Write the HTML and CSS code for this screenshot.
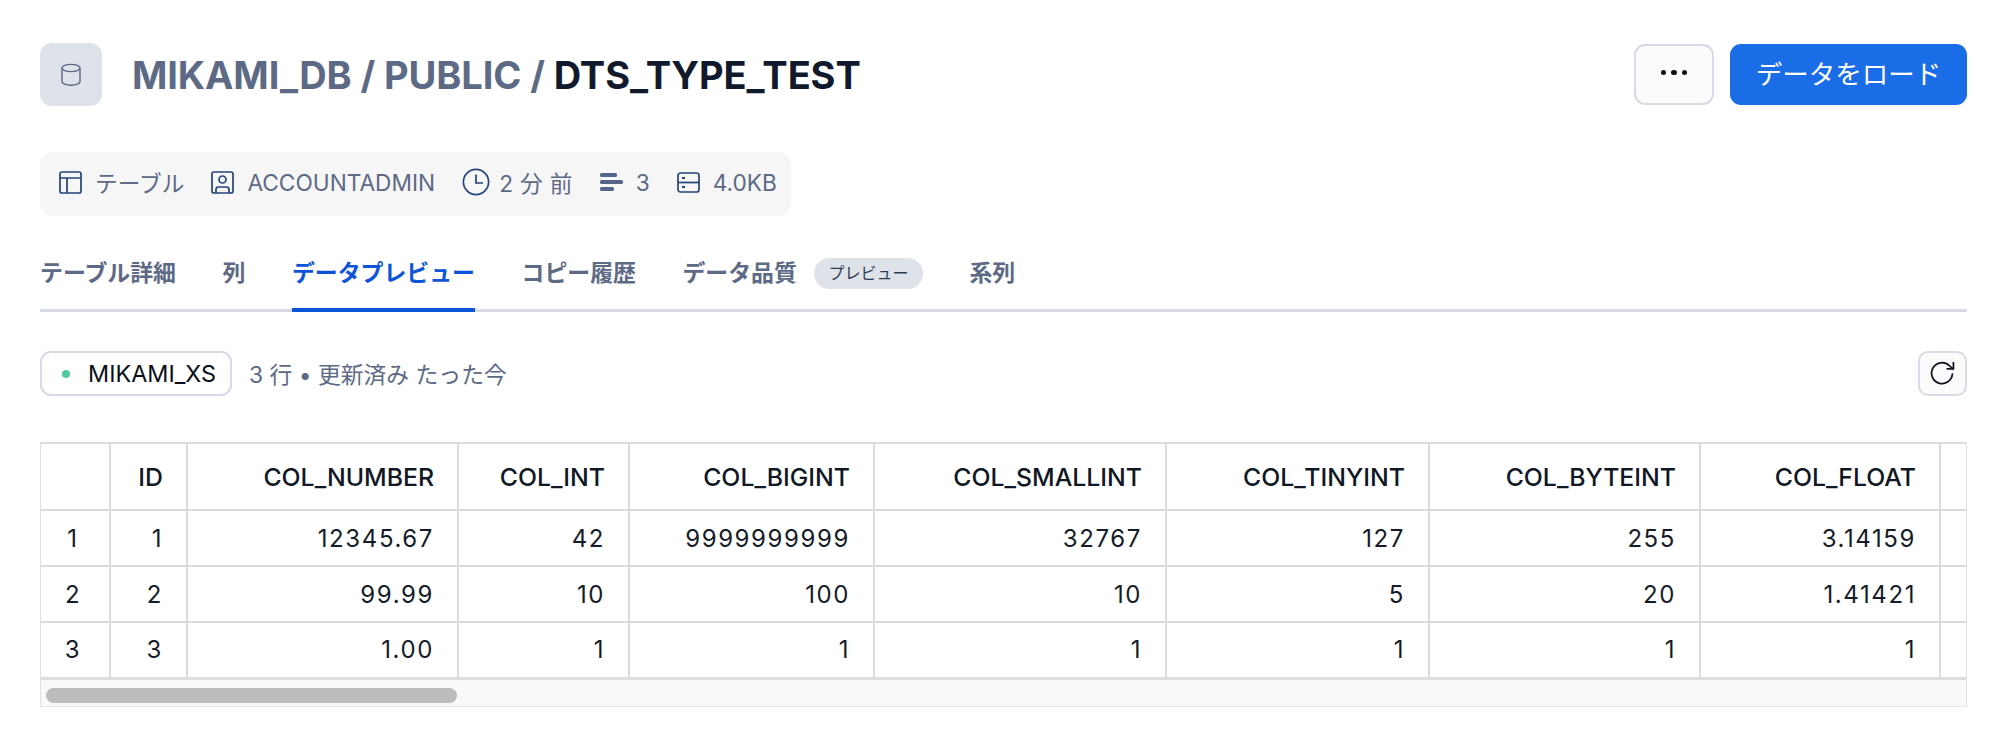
FILE: index.html
```html
<!DOCTYPE html>
<html lang="ja">
<head>
<meta charset="utf-8">
<title>DTS_TYPE_TEST</title>
<link rel="stylesheet" href="styles.css">
</head>
<body>
<main class="page">
  <header class="head">
    <div class="head-left">
      <div class="db-tile">
        <svg class="db-icon" viewBox="0 0 20 24" fill="none" stroke="currentColor" stroke-width="1.4"><ellipse cx="10" cy="5" rx="9" ry="3.6"/><path d="M1 5v13.5c0 2.2 4 3.8 9 3.8s9-1.600 9-3.800V5"/></svg>
      </div>
      <h1 class="title"><span class="crumb">MIKAMI_DB / PUBLIC / </span>DTS_TYPE_TEST</h1>
    </div>
    <div class="head-actions">
      <button class="more-btn" aria-label="more"><i></i><i></i><i></i></button>
      <button class="load-btn">データをロード</button>
    </div>
  </header>

  <div class="meta">
    <span class="meta-item">
      <svg class="ico" viewBox="0 0 23 23" fill="none" stroke="currentColor" stroke-width="1.7"><rect x="1" y="1" width="21" height="21" rx="2"/><path d="M1 7h21M8 7v15"/></svg>
      テーブル
    </span>
    <span class="meta-item">
      <svg class="ico" viewBox="0 0 23 23" fill="none" stroke="currentColor" stroke-width="1.7"><rect x="1" y="1" width="21" height="21" rx="2"/><circle cx="11.500" cy="8.500" r="3.500"/><path d="M5 22v-3.500c0-1.500 1-2.500 2.500-2.500h8c1.500 0 2.500 1 2.500 2.500V22"/></svg>
      ACCOUNTADMIN
    </span>
    <span class="meta-item tight">
      <svg class="ico clock" viewBox="0 0 28 28" fill="none" stroke="currentColor" stroke-width="1.700"><circle cx="14" cy="14" r="12.600"/><path d="M14 6.500V15h7"/></svg>
      <span class="spaced">2 分 前</span>
    </span>
    <span class="meta-item">
      <svg class="ico bars" viewBox="0 0 23 18" fill="currentColor"><rect x="0" y="0" width="17" height="4" rx="1.500"/><rect x="0" y="7" width="23" height="4" rx="1.500"/><rect x="0" y="14" width="14" height="4" rx="1.500"/></svg>
      3
    </span>
    <span class="meta-item">
      <svg class="ico" viewBox="0 0 23 23" fill="none" stroke="currentColor" stroke-width="1.700"><rect x="1" y="2" width="21" height="19" rx="2.500"/><path d="M1 11.500h21"/><path d="M5 7h3M5 16h3" stroke-width="2.200"/></svg>
      4.0KB
    </span>
  </div>

  <nav class="tabs">
    <a class="tab">テーブル詳細</a>
    <a class="tab">列</a>
    <a class="tab active">データプレビュー</a>
    <a class="tab">コピー履歴</a>
    <a class="tab">データ品質<span class="badge">プレビュー</span></a>
    <a class="tab">系列</a>
  </nav>

  <div class="toolbar">
    <div class="toolbar-left">
      <span class="chip"><i class="dot"></i>MIKAMI_XS</span>
      <span class="status">3 行 • 更新済み たった今</span>
    </div>
    <button class="refresh" aria-label="refresh">
      <svg viewBox="0 0 24 24" fill="none" stroke="currentColor" stroke-width="1.700" stroke-linecap="round" stroke-linejoin="round"><path d="M21.500 12.500A10 10 0 1 1 18.500 4.500L22 7.500"/><path d="M22.500 1.500v6h-6"/></svg>
    </button>
  </div>

  <div class="grid-wrap">
    <table class="grid">
      <colgroup>
        <col class="c0"><col class="c1"><col class="c2"><col class="c3"><col class="c4"><col class="c5"><col class="c6"><col class="c7"><col class="c8"><col class="c9">
      </colgroup>
      <thead>
        <tr><th></th><th>ID</th><th>COL_NUMBER</th><th>COL_INT</th><th>COL_BIGINT</th><th>COL_SMALLINT</th><th>COL_TINYINT</th><th>COL_BYTEINT</th><th>COL_FLOAT</th><th></th></tr>
      </thead>
      <tbody>
        <tr><td class="idx">1</td><td>1</td><td>12345.67</td><td>42</td><td>9999999999</td><td>32767</td><td>127</td><td>255</td><td>3.14159</td><td></td></tr>
        <tr><td class="idx">2</td><td>2</td><td>99.99</td><td>10</td><td>100</td><td>10</td><td>5</td><td>20</td><td>1.41421</td><td></td></tr>
        <tr><td class="idx">3</td><td>3</td><td>1.00</td><td>1</td><td>1</td><td>1</td><td>1</td><td>1</td><td>1</td><td></td></tr>
      </tbody>
    </table>
    <div class="scroll"><div class="thumb"></div></div>
  </div>
</main>
</body>
</html>
```
FILE: styles.css
```css
* { box-sizing: border-box; }
html, body { margin: 0; padding: 0; background: #fff; }
body {
  font-family: Inter, "Noto Sans CJK JP", sans-serif;
  color: #5d6a85;
  height: 741px;
  overflow: hidden;
}
.page { padding: 43px 33px 0 40px; }

.head { display: flex; justify-content: space-between; align-items: flex-start; height: 63px; }
.head-left { display: flex; align-items: center; gap: 30px; height: 63px; }
.db-tile {
  width: 62px; height: 63px; border-radius: 12px; background: #dee3ea;
  display: flex; align-items: center; justify-content: center; color: #5d6a85;
}
.db-icon { width: 20px; height: 24px; }
.title { margin: 0; font-size: 38px; font-weight: 700; color: #111a2c; letter-spacing: -0.1px; line-height: 46px; }
.crumb { color: #5d6a85; }
.head-actions { display: flex; gap: 16px; margin-top: 1px; }
.more-btn {
  width: 80px; height: 61px; border: 2px solid #d6dbe6; border-radius: 11px; background: #fbfbfc;
  display: flex; align-items: center; justify-content: center; gap: 5px; padding: 0 0 4px;
}
.more-btn i { width: 5.500px; height: 5.500px; border-radius: 50%; background: #0b0f19; }
.load-btn {
  width: 237px; height: 61px; border: 0; border-radius: 11px; background: #1a6ce7; color: #fff;
  font: 400 26.500px Inter, "Noto Sans CJK JP", sans-serif; padding: 0 0 5px;
}

.meta {
  margin-top: 46px; height: 64px; width: 751px; background: #f6f6f7; border-radius: 13px;
  display: flex; align-items: center; padding: 0 19px 4px; gap: 27px; font-size: 22.700px; color: #5d6a85;
}
.meta-item { display: inline-flex; align-items: center; gap: 13px; white-space: nowrap; }
.meta-item.tight { gap: 9px; }
.spaced { letter-spacing: 0.300px; }
.ico { width: 23px; height: 23px; color: #25447a; flex: none; }
.clock { width: 28px; height: 28px; }
.bars { height: 18px; color: #55658a; }

.tabs {
  margin-top: 29px; height: 67px; display: flex; gap: 46.500px; align-items: flex-start;
  border-bottom: 3px solid #d6dbe6;
}
.tab {
  height: 67px; line-height: 56px; font-size: 22.900px; font-weight: 600; color: #5d6a85;
  display: inline-flex; align-items: flex-start; white-space: nowrap;
}
.tab.active { color: #0d55d8; border-bottom: 4px solid #0d55d8; }
.badge {
  margin: 13px 0 0 17px; width: 109px; height: 31px; border-radius: 16px; background: #dee3ea;
  color: #2f3a50; font-size: 16px; font-weight: 400; line-height: 31px; text-align: center;
}

.toolbar { margin-top: 39px; display: flex; justify-content: space-between; align-items: center; height: 45px; }
.toolbar-left { display: flex; align-items: center; gap: 17px; }
.chip {
  width: 192px; height: 45px; border: 2px solid #d6dbe6; border-radius: 11px; background: #fff;
  display: inline-flex; align-items: center; padding-left: 20px; color: #0b0f19; font-size: 23.400px;
}
.dot { width: 8px; height: 8px; border-radius: 50%; background: #4fc9a0; margin-right: 18px; }
.status { font-size: 22.800px; color: #5d6a85; }
.refresh {
  width: 49px; height: 45px; border: 2px solid #d6dbe6; border-radius: 10px; background: #fbfbfc;
  color: #11151f; padding: 0; display: flex; align-items: center; justify-content: center;
}
.refresh svg { width: 25px; height: 25px; }

.grid-wrap { margin-top: 46px; border: 1px solid #dcdfe6; border-bottom-color: #e6e7ea; border-top: 0; overflow: hidden; }
.grid { border-collapse: collapse; table-layout: fixed; width: 1926px; font-size: 24px; color: #151b28; }
.grid th, .grid td { border: 2px solid #dbdcdf; padding: 0 23px 0 0; text-align: right; white-space: nowrap; }
.grid th:first-child, .grid td:first-child { border-left: 0; }
.grid th:last-child, .grid td:last-child { border-right: 0; }
.grid th { height: 67px; font-weight: 500; font-size: 24.800px; color: #101725; }
.grid thead tr { border-top: 2px solid #dbdcdf; }
.grid td { height: 56px; font-weight: 400; letter-spacing: 1.600px; }
.grid td.idx { text-align: center; padding: 0 4px 0 0; }
.grid tbody tr:last-child td { border-bottom: 3px solid #dddee0; }
.c0 { width: 69px; } .c1 { width: 77px; } .c2 { width: 271px; } .c3 { width: 171px; }
.c4 { width: 245px; } .c5 { width: 292px; } .c6 { width: 263px; } .c7 { width: 271px; }
.c8 { width: 240px; } .c9 { width: 27px; }

.scroll { height: 26px; background: #f9f9f9; padding: 8px 0 0 5px; }
.thumb { width: 411px; height: 15px; border-radius: 8px; background: #bcbcbc; }
```
